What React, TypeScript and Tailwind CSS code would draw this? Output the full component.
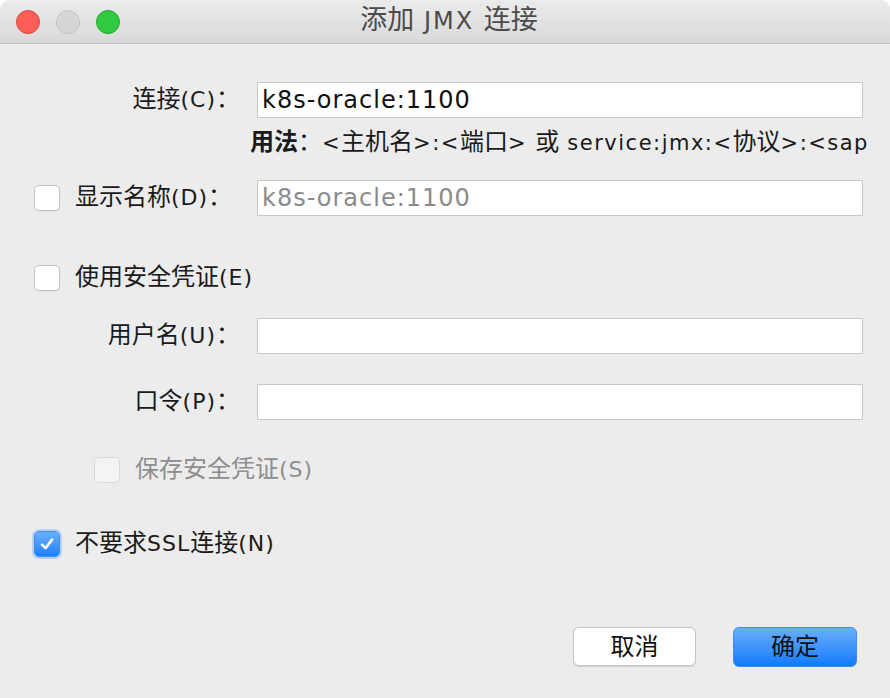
import type { ReactNode } from "react";

// Java Aqua mixes a wide Latin face with larger CJK fallback glyphs, so runs get sized separately
function Mixed({ text, cjk, latin }: { text: string; cjk: string; latin: string }) {
  const parts = text.split(/([\u3000-\u9fff\uff00-\uffef]+)/).filter((p) => p !== "");
  return (
    <>
      {parts.map((p, i) =>
        /[\u3000-\u9fff\uff00-\uffef]/.test(p) ? (
          <span key={i} className={cjk}>
            {p}
          </span>
        ) : (
          <span key={i} className={"whitespace-pre " + latin}>
            {p}
          </span>
        )
      )}
    </>
  );
}

const LABEL_CJK = "text-[24px]";
const LABEL_LATIN = "text-[22px] tracking-[1px]";

function Label({ text, muted }: { text: string; muted?: boolean }) {
  return (
    <span className={"whitespace-nowrap leading-[32px] " + (muted ? "text-[#8e8e8e]" : "text-[#1a1a1a]")}>
      <Mixed text={text} cjk={LABEL_CJK} latin={LABEL_LATIN} />
    </span>
  );
}

function Checkbox({ checked, disabled }: { checked?: boolean; disabled?: boolean }) {
  if (checked) {
    return (
      <div className="flex h-[26px] w-[26px] shrink-0 items-center justify-center rounded-[5px] border border-[#3c8ef5] bg-gradient-to-b from-[#69b1fd] to-[#1b7ffb] shadow-[0_0_0_2px_rgba(90,160,250,0.35)]">
        <svg width="16" height="16" viewBox="0 0 16 16">
          <path d="M3 8.6 L6.6 12.2 L13 3.6" fill="none" stroke="white" strokeWidth="2.6" strokeLinecap="round" strokeLinejoin="round" />
        </svg>
      </div>
    );
  }
  return (
    <div
      className={
        disabled
          ? "h-[26px] w-[26px] shrink-0 rounded-[5px] border border-[#d8d8d8] bg-[#f4f4f4]"
          : "h-[26px] w-[26px] shrink-0 rounded-[5px] border border-[#c0c0c0] bg-white shadow-[0_1px_1px_rgba(0,0,0,0.06)]"
      }
    />
  );
}

function Field({ value, muted }: { value?: string; muted?: boolean }) {
  return (
    <div
      className={
        "flex h-[36px] flex-1 items-center overflow-hidden whitespace-nowrap border border-[#c8c8c8] bg-white pl-[4px] text-[24px] tracking-[1px] " +
        (muted ? "text-[#8b8b8b]" : "text-[#111]")
      }
    >
      {value}
    </div>
  );
}

function Row({ label, children, className = "" }: { label: ReactNode; children: ReactNode; className?: string }) {
  return (
    <div className={"flex items-center pr-[27px] " + className}>
      <div className="w-[257px] shrink-0">{label}</div>
      {children}
    </div>
  );
}

function RightLabel({ text }: { text: string }) {
  return (
    <div className="pr-[17px] text-right">
      <Label text={text} />
    </div>
  );
}

function CheckRow({ text, checked, disabled, className = "" }: { text: string; checked?: boolean; disabled?: boolean; className?: string }) {
  return (
    <div className={"flex h-[32px] items-center gap-[15px] " + className}>
      <Checkbox checked={checked} disabled={disabled} />
      <Label text={text} muted={disabled} />
    </div>
  );
}

export default function App() {
  return (
    <div className="h-[698px] w-[890px] overflow-hidden bg-white font-['DejaVu_Sans','Noto_Sans_CJK_SC',sans-serif]">
      <div className="flex h-full w-full flex-col overflow-hidden rounded-t-[10px] bg-[#ececec]">
        <div className="relative flex h-[44px] shrink-0 items-center justify-center border-b border-[#c4c4c4] bg-gradient-to-b from-[#ebebeb] to-[#d9d9d9] pl-[8px]">
          <div className="absolute left-[16px] top-[10px] flex gap-[16px]">
            <div className="h-[24px] w-[24px] rounded-full border border-[#e0443e] bg-[#fd5e57]" />
            <div className="h-[24px] w-[24px] rounded-full border border-[#c2c2c2] bg-[#d6d6d6]" />
            <div className="h-[24px] w-[24px] rounded-full border border-[#21a730] bg-[#31c940]" />
          </div>
          <span className="whitespace-nowrap leading-[32px] text-[#4b4b4b]">
            <Mixed text="添加 JMX 连接" cjk="text-[27px]" latin="text-[24px] tracking-[2px]" />
          </span>
        </div>

        <Row label={<RightLabel text="连接(C)：" />} className="mt-[38px]">
          <Field value="k8s-oracle:1100" />
        </Row>

        <div className="ml-[250px] mr-[20px] mt-[6px] h-[36px] overflow-hidden whitespace-nowrap leading-[36px] text-[#1a1a1a]">
          <span className="text-[24px] font-bold">用法</span>
          <Mixed text="：<主机名>:<端口> 或 service:jmx:<协议>:<sap" cjk="text-[24px]" latin="text-[21px] tracking-[1.5px]" />
        </div>

        <Row
          className="mt-[20px]"
          label={
            <div className="flex items-center gap-[15px] pl-[34px]">
              <Checkbox />
              <Label text="显示名称(D)：" />
            </div>
          }
        >
          <Field value="k8s-oracle:1100" muted />
        </Row>

        <CheckRow text="使用安全凭证(E)" className="mt-[46px] pl-[34px]" />

        <Row label={<RightLabel text="用户名(U)：" />} className="mt-[24px]">
          <Field />
        </Row>

        <Row label={<RightLabel text="口令(P)：" />} className="mt-[30px]">
          <Field />
        </Row>

        <CheckRow text="保存安全凭证(S)" disabled className="mt-[34px] pl-[94px]" />

        <CheckRow text="不要求SSL连接(N)" checked className="mt-[42px] pl-[34px]" />

        <div className="mt-[67px] flex justify-end gap-[37px] pr-[33px]">
          <button className="h-[39px] w-[123px] rounded-[6px] border border-[#c6c6c6] bg-white text-[24px] text-[#111] shadow-[0_1px_1px_rgba(0,0,0,0.12)]">
            取消
          </button>
          <button className="h-[40px] w-[124px] rounded-[6px] border border-[#3a8ef5] bg-gradient-to-b from-[#66affc] to-[#0a79fb] text-[24px] text-[#111]">
            确定
          </button>
        </div>
      </div>
    </div>
  );
}
